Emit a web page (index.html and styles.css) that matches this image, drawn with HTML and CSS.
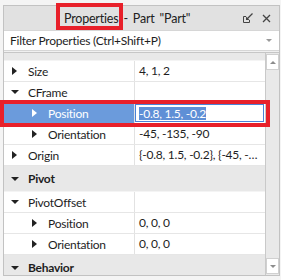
FILE: index.html
```html
<!DOCTYPE html>
<html lang="en">
<head>
    <meta charset="UTF-8">
    <title>Properties</title>
    <link rel="stylesheet" href="styles.css">
</head>
<body>

    <div class="stage">
        <div class="window">
            <div class="titlebar">
                <span class="title">Properties - Part "Part"</span>
                <div class="tools">
                    <svg class="undock" width="10" height="10" viewBox="0 0 10 10">
                        <path d="M0.5 3.5 V9.5 H6.5" fill="none" stroke="#444" stroke-width="1"/>
                        <path d="M0.5 3.5 H3 M6.5 9.5 V7" fill="none" stroke="#444" stroke-width="1"/>
                        <path d="M9.5 0.5 L4 6" stroke="#444" stroke-width="1.2"/>
                        <path d="M3 3.5 V7 H6.5 Z" fill="#444"/>
                    </svg>
                    <svg class="close" width="9" height="9" viewBox="0 0 9 9">
                        <path d="M1 1 L8 8 M8 1 L1 8" stroke="#444" stroke-width="1.3"/>
                    </svg>
                </div>
            </div>

            <div class="filter">
                <span class="hint">Filter Properties (Ctrl+Shift+P)</span>
                <span class="caret"></span>
            </div>

            <div class="list">
                <div class="rows">
                    <div class="cat cut"></div>

                    <div class="row">
                        <div class="name"><span class="arr right"></span>Size</div>
                        <div class="value">4, 1, 2</div>
                    </div>
                    <div class="row">
                        <div class="name"><span class="arr down"></span>CFrame</div>
                        <div class="value"></div>
                    </div>
                    <div class="row selected">
                        <div class="name sub"><span class="arr right"></span>Position</div>
                        <div class="value">
                            <div class="edit"><span class="sel">-0.8, 1.5, -0.2</span></div>
                        </div>
                    </div>
                    <div class="row">
                        <div class="name sub"><span class="arr right"></span>Orientation</div>
                        <div class="value">-45, -135, -90</div>
                    </div>
                    <div class="row">
                        <div class="name"><span class="arr right"></span>Origin</div>
                        <div class="value">{-0.8, 1.5, -0.2}, {-45, -135, -90}</div>
                    </div>

                    <div class="cat"><span class="arr down"></span>Pivot</div>

                    <div class="row">
                        <div class="name"><span class="arr down"></span>PivotOffset</div>
                        <div class="value"></div>
                    </div>
                    <div class="row">
                        <div class="name sub"><span class="arr right"></span>Position</div>
                        <div class="value">0, 0, 0</div>
                    </div>
                    <div class="row">
                        <div class="name sub"><span class="arr right"></span>Orientation</div>
                        <div class="value">0, 0, 0</div>
                    </div>

                    <div class="cat"><span class="arr down"></span>Behavior</div>
                </div>

                <div class="scrollbar">
                    <div class="sb-btn"><span class="sb-up"></span></div>
                    <div class="sb-track"></div>
                    <div class="sb-btn"><span class="sb-down"></span></div>
                </div>
            </div>
        </div>

        <!-- red annotation frames -->
        <div class="mark mark-title"></div>
        <div class="mark mark-row"></div>
    </div>

</body>
</html>
```

FILE: styles.css
```css
body {
    margin: 0;
    background: #f4f4f4;
    font-family: "Lato", "Liberation Sans", sans-serif;
    font-size: 12px;
    letter-spacing: -0.25px;
    color: #1e1e1e;
}

.stage {
    position: relative;
    width: 281px;
    height: 280px;
    overflow: hidden;
}

.window {
    box-sizing: border-box;
    width: 277px;
    height: 271px;
    margin: 5px 0 0 3px;
    border: 1px solid #c2c2c2;
    display: flex;
    flex-direction: column;
    background: #f0f0f0;
}

.titlebar {
    height: 24px;
    flex: none;
    display: flex;
    align-items: center;
    background: #e1e1e1;
}

.title {
    flex: 1;
    padding-left: 60px;
    font-size: 12.5px;
    letter-spacing: -0.2px;
    word-spacing: 2px;
    white-space: nowrap;
    color: #222;
}

.tools {
    width: 44px;
    display: flex;
    align-items: center;
    justify-content: flex-end;
    gap: 9px;
    padding-right: 8px;
}

.undock {
    margin-top: -1px;
}

.filter {
    height: 19px;
    flex: none;
    display: flex;
    align-items: center;
    justify-content: space-between;
    padding: 0 7px 0 6px;
    background: #fff;
    border-top: 1px solid #d6d6d6;
    border-bottom: 1px solid #d6d6d6;
}

.caret {
    width: 0;
    height: 0;
    border-left: 3px solid transparent;
    border-right: 3px solid transparent;
    border-top: 3px solid #9a9a9a;
}

.list {
    flex: 1;
    display: flex;
    margin-top: 1px;
    border-top: 1px solid #c6c6c6;
    background: #fff;
    overflow: hidden;
}

.rows {
    flex: 1;
    min-width: 0;
    overflow: hidden;
}

.row {
    box-sizing: border-box;
    height: 21px;
    display: flex;
    border-bottom: 1px solid #e6e6e6;
}

.name {
    box-sizing: border-box;
    width: 131px;
    flex: none;
    display: flex;
    align-items: center;
    padding-left: 8px;
    border-right: 1px solid #e2e2e2;
}

.name.sub {
    padding-left: 28px;
}

.value {
    flex: 1;
    min-width: 0;
    padding: 0 1px 0 4px;
    line-height: 20px;
    white-space: nowrap;
    overflow: hidden;
    text-overflow: ellipsis;
}

.arr {
    width: 16px;
    flex: none;
    display: flex;
    align-items: center;
}

.arr::before {
    content: "";
    width: 0;
    height: 0;
}

.arr.right::before {
    border-left: 5px solid #222;
    border-top: 4px solid transparent;
    border-bottom: 4px solid transparent;
}

.arr.down::before {
    border-top: 4px solid #222;
    border-left: 4px solid transparent;
    border-right: 4px solid transparent;
    margin-left: -1px;
}

.cat {
    box-sizing: border-box;
    height: 26px;
    display: flex;
    align-items: center;
    padding-left: 8px;
    background: #e8e8e8;
    border-bottom: 1px solid #f4f4f4;
    font-weight: bold;
}

.cat.cut {
    height: 8px;
}

.selected .name {
    background: #6b9bdc;
    color: #fff;
}

.selected .name .arr.right::before {
    border-left-color: #fff;
}

.selected .value {
    display: flex;
    align-items: center;
    padding: 0;
}

.edit {
    box-sizing: border-box;
    flex: 1;
    height: 18px;
    margin-right: 1px;
    display: flex;
    align-items: center;
    padding-left: 3px;
    border: 1px solid #4a82d6;
    background: #fff;
}

.sel {
    background: #5f8fd6;
    color: #fff;
    line-height: 13px;
}

.scrollbar {
    width: 13px;
    flex: none;
    display: flex;
    flex-direction: column;
    background: #e9e9e9;
    border-left: 1px solid #c9c9c9;
}

.sb-btn {
    box-sizing: border-box;
    height: 16px;
    margin: 1px 0;
    display: flex;
    align-items: center;
    justify-content: center;
    background: #fff;
    border: 1px solid #d0d0d0;
}

.sb-track {
    flex: 1;
    background: #e9e9e9;
}

.sb-up, .sb-down {
    width: 0;
    height: 0;
    border-left: 3px solid transparent;
    border-right: 3px solid transparent;
}

.sb-up {
    border-bottom: 3px solid #8c8c8c;
}

.sb-down {
    border-top: 3px solid #8c8c8c;
}

.mark {
    position: absolute;
    box-sizing: border-box;
    border: 4px solid #e8202a;
}

.mark-title {
    left: 56px;
    top: 3px;
    width: 67px;
    height: 27px;
}

.mark-row {
    left: 0;
    top: 100px;
    width: 270px;
    height: 27px;
}
```
